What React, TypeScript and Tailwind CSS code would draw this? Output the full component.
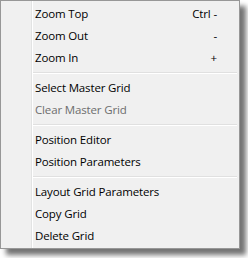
import React from 'react'

type Item = { label: string; shortcut?: string; disabled?: boolean } | 'sep'

const items: Item[] = [
  { label: 'Zoom Top', shortcut: 'Ctrl -' },
  { label: 'Zoom Out', shortcut: '-' },
  { label: 'Zoom In', shortcut: '+' },
  'sep',
  { label: 'Select Master Grid' },
  { label: 'Clear Master Grid', disabled: true },
  'sep',
  { label: 'Position Editor' },
  { label: 'Position Parameters' },
  'sep',
  { label: 'Layout Grid Parameters' },
  { label: 'Copy Grid' },
  { label: 'Delete Grid' },
]

export default function App() {
  return (
    <div className="w-[248px] h-[258px] bg-white" style={{ fontFamily: '"Open Sans", "Noto Sans", sans-serif' }}>
      <div className="flex w-[240px] h-[249px] border border-[#979797] bg-[#f0f0f0] shadow-[6px_6px_5px_rgba(0,0,0,0.55)]">
        <div className="w-[31px] shrink-0 border-r border-[#e2e3e3]" />
        <div className="flex-1 border-l border-white pl-[2px] pr-[2px] pt-[2px]">
          {items.map((item, i) =>
            item === 'sep' ? (
              <div key={i} className="h-[8px] flex flex-col justify-center -ml-[2px]">
                <div className="h-[1px] bg-[#e0e0e0]" />
                <div className="h-[1px] bg-white" />
              </div>
            ) : (
              <div
                key={i}
                className={`flex h-[22px] items-center justify-between pr-[20px] text-[11.5px] tracking-[-0.15px] ${item.disabled ? 'text-[#6d6d6d]' : 'text-black'}`}
              >
                <span>{item.label}</span>
                {item.shortcut ? <span>{item.shortcut}</span> : null}
              </div>
            )
          )}
        </div>
      </div>
    </div>
  )
}
